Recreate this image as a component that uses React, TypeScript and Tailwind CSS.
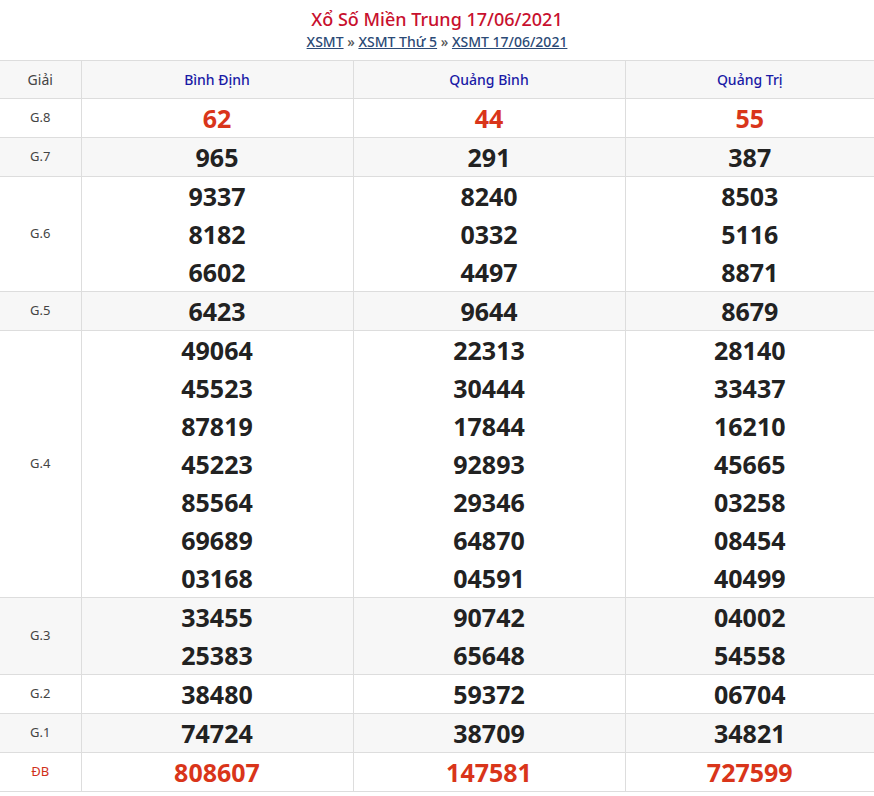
const PROVINCES = ["Bình Định", "Quảng Bình", "Quảng Trị"];

const ROWS: { label: string; red?: boolean; big?: boolean; values: string[][] }[] = [
  { label: "G.8", red: true, values: [["62"], ["44"], ["55"]] },
  { label: "G.7", values: [["965"], ["291"], ["387"]] },
  { label: "G.6", values: [["9337", "8182", "6602"], ["8240", "0332", "4497"], ["8503", "5116", "8871"]] },
  { label: "G.5", values: [["6423"], ["9644"], ["8679"]] },
  {
    label: "G.4",
    values: [
      ["49064", "45523", "87819", "45223", "85564", "69689", "03168"],
      ["22313", "30444", "17844", "92893", "29346", "64870", "04591"],
      ["28140", "33437", "16210", "45665", "03258", "08454", "40499"],
    ],
  },
  { label: "G.3", values: [["33455", "25383"], ["90742", "65648"], ["04002", "54558"]] },
  { label: "G.2", values: [["38480"], ["59372"], ["06704"]] },
  { label: "G.1", values: [["74724"], ["38709"], ["34821"]] },
  { label: "ĐB", red: true, values: [["808607"], ["147581"], ["727599"]] },
];

export default function App() {
  return (
    <div className="w-[874px] bg-white font-['Roboto',sans-serif]">
      <div className="flex flex-col items-center pt-[6px] pb-[8px]">
        <h1 className="text-[18px] leading-[26px] font-medium text-[#c8102e]">Xổ Số Miền Trung 17/06/2021</h1>
        <div className="text-[14px] leading-[20px] font-medium text-[#555]">
          <a className="underline text-[#2b4a76]">XSMT</a> » <a className="underline text-[#2b4a76]">XSMT Thứ 5</a> »{" "}
          <a className="underline text-[#2b4a76]">XSMT 17/06/2021</a>
        </div>
      </div>
      <table className="w-full border-collapse table-fixed">
        <colgroup>
          <col className="w-[81px]" />
          <col className="w-[272px]" />
          <col className="w-[272px]" />
          <col />
        </colgroup>
        <thead>
          <tr className="bg-[#f7f7f7] border-y border-[#ddd] h-[38px]">
            <th className="font-normal text-[14px] text-[#444] border-r border-[#ddd]">Giải</th>
            {PROVINCES.map((p) => (
              <th key={p} className="text-[14px] font-medium text-[#1a1aa6] border-r border-[#ddd] last:border-r-0">
                {p}
              </th>
            ))}
          </tr>
        </thead>
        <tbody>
          {ROWS.map((r, i) => (
            <tr key={r.label} className={`border-b border-[#ddd] ${i % 2 === 1 ? "bg-[#f7f7f7]" : "bg-white"}`}>
              <td className={`text-center text-[13px] border-r border-[#ddd] ${r.label === "ĐB" ? "text-[#d0301a]" : "text-[#444]"}`}>
                {r.label}
              </td>
              {r.values.map((vals, j) => (
                <td key={j} className="text-center border-r border-[#ddd] last:border-r-0">
                  {vals.map((v) => (
                    <div
                      key={v}
                      className={`h-[38px] leading-[38px] text-[25px] font-bold ${r.red ? "text-[#d9351a]" : "text-[#222]"}`}
                    >
                      {v}
                    </div>
                  ))}
                </td>
              ))}
            </tr>
          ))}
        </tbody>
      </table>
    </div>
  );
}
